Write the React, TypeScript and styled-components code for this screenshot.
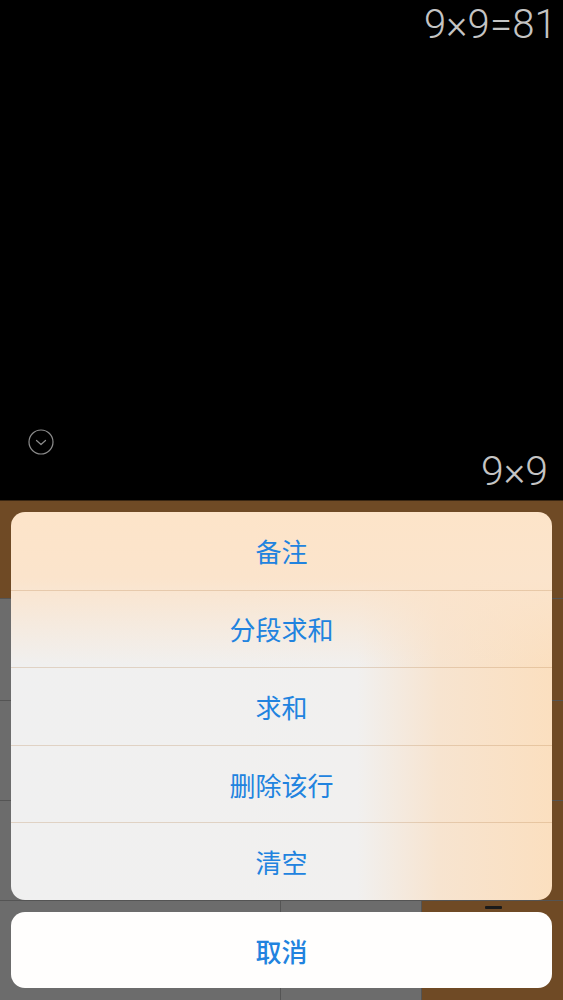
import React from 'react';
import styled, { createGlobalStyle } from 'styled-components';

const GlobalStyle = createGlobalStyle`
    html, body {
        margin: 0;
        padding: 0;
        background: #000;
    }
    body {
        font-family: 'Liberation Sans', 'Noto Sans CJK SC', sans-serif;
    }
`;

const Screen = styled.div`
    position: relative;
    width: 563px;
    height: 1000px;
    overflow: hidden;
    display: flex;
    flex-direction: column;
    background: #000;
`;

const Display = styled.div`
    height: 500px;
    display: flex;
    flex-direction: column;
    justify-content: space-between;
    padding: 2px 6px 8px 28px;
    box-sizing: border-box;
`;

const Formula = styled.div`
    align-self: flex-end;
    font-family: 'Roboto', 'Liberation Sans', sans-serif;
    font-weight: 300;
    font-size: 40px;
    line-height: 46px;
    color: #c4c4c4;
    letter-spacing: 0.2px;
`;

const DisplayBottom = styled.div`
    display: flex;
    justify-content: space-between;
    align-items: flex-end;
`;

const Collapse = styled.div`
    width: 26px;
    height: 26px;
    margin-bottom: 37px;
    color: #8c8c8c;
    display: flex;
`;

const Result = styled.div`
    font-family: 'Roboto', 'Liberation Sans', sans-serif;
    font-weight: 300;
    font-size: 41px;
    line-height: 42px;
    color: #c4c4c4;
    margin-right: 9px;
`;

const Keypad = styled.div`
    flex: 1;
    display: grid;
    grid-template-columns: 139px 140px 140px 1fr;
    grid-template-rows: 97px 101px 99px 99px 1fr;
    gap: 1px;
    border-top: 1px solid #3a2612;
    background: #545454;
`;

const Key = styled.div<{ tone: 'brown' | 'gray'; span?: number }>`
    grid-column: span ${(p) => p.span ?? 1};
    background: ${(p) => (p.tone === 'brown' ? '#6f4a25' : '#6c6c6c')};
    display: flex;
    align-items: flex-start;
`;

const KeyMark = styled.span`
    width: 17px;
    height: 3px;
    border-radius: 1px;
    margin: 5px 0 0 63px;
    background: #1a1a1a;
`;

const Sheet = styled.div`
    position: absolute;
    left: 11px;
    right: 11px;
    bottom: 12px;
    display: flex;
    flex-direction: column;
    gap: 12px;
`;

const Group = styled.div`
    border-radius: 14px;
    overflow: hidden;
    display: flex;
    flex-direction: column;
    background:
        linear-gradient(180deg, #fde4c9 0%, #fbe4cc 17%, rgba(244, 238, 232, 0) 40%),
        linear-gradient(90deg, #f0f0f0 0%, #f1f0ef 64%, #f7e4d0 79%, #fbdfbf 100%);
`;

const Item = styled.div<{ first?: boolean }>`
    height: 77.6px;
    display: flex;
    align-items: center;
    justify-content: center;
    border-top: ${(p) => (p.first ? 'none' : '1px solid rgba(175, 120, 65, 0.25)')};
    box-sizing: border-box;
    font-family: 'Noto Sans CJK SC', sans-serif;
    font-size: 26px;
    color: #2183df;
`;

const Cancel = styled.div`
    height: 76px;
    border-radius: 14px;
    background: #fffefd;
    display: flex;
    align-items: center;
    justify-content: center;
    font-family: 'Noto Sans CJK SC', sans-serif;
    font-size: 26px;
    font-weight: 500;
    color: #2183df;
`;

const actions = ['备注', '分段求和', '求和', '删除该行', '清空'];

const keys: { tone: 'brown' | 'gray'; span?: number; mark?: boolean }[] = [
    { tone: 'brown', span: 4 },
    { tone: 'gray' }, { tone: 'gray' }, { tone: 'gray' }, { tone: 'brown' },
    { tone: 'gray' }, { tone: 'gray' }, { tone: 'gray' }, { tone: 'brown' },
    { tone: 'gray' }, { tone: 'gray' }, { tone: 'gray' }, { tone: 'brown' },
    { tone: 'gray', span: 2 }, { tone: 'gray' }, { tone: 'brown', mark: true },
];

const App: React.FC = () => (
    <>
        <GlobalStyle />
        <Screen>
            <Display>
                <Formula>9×9=81</Formula>
                <DisplayBottom>
                    <Collapse>
                        <svg width="26" height="26" viewBox="0 0 26 26" fill="none">
                            <circle cx="13" cy="13" r="12" stroke="currentColor" strokeWidth="1.2" />
                            <path d="M8.5 11.5 L13 15.5 L17.5 11.5" stroke="currentColor" strokeWidth="1.2" strokeLinecap="round" strokeLinejoin="round" />
                        </svg>
                    </Collapse>
                    <Result>9×9</Result>
                </DisplayBottom>
            </Display>
            <Keypad>
                {keys.map((k, i) => (
                    <Key key={i} tone={k.tone} span={k.span}>
                        {k.mark && <KeyMark />}
                    </Key>
                ))}
            </Keypad>
            <Sheet>
                <Group>
                    {actions.map((a, i) => (
                        <Item key={a} first={i === 0}>
                            {a}
                        </Item>
                    ))}
                </Group>
                <Cancel>取消</Cancel>
            </Sheet>
        </Screen>
    </>
);

export default App;
